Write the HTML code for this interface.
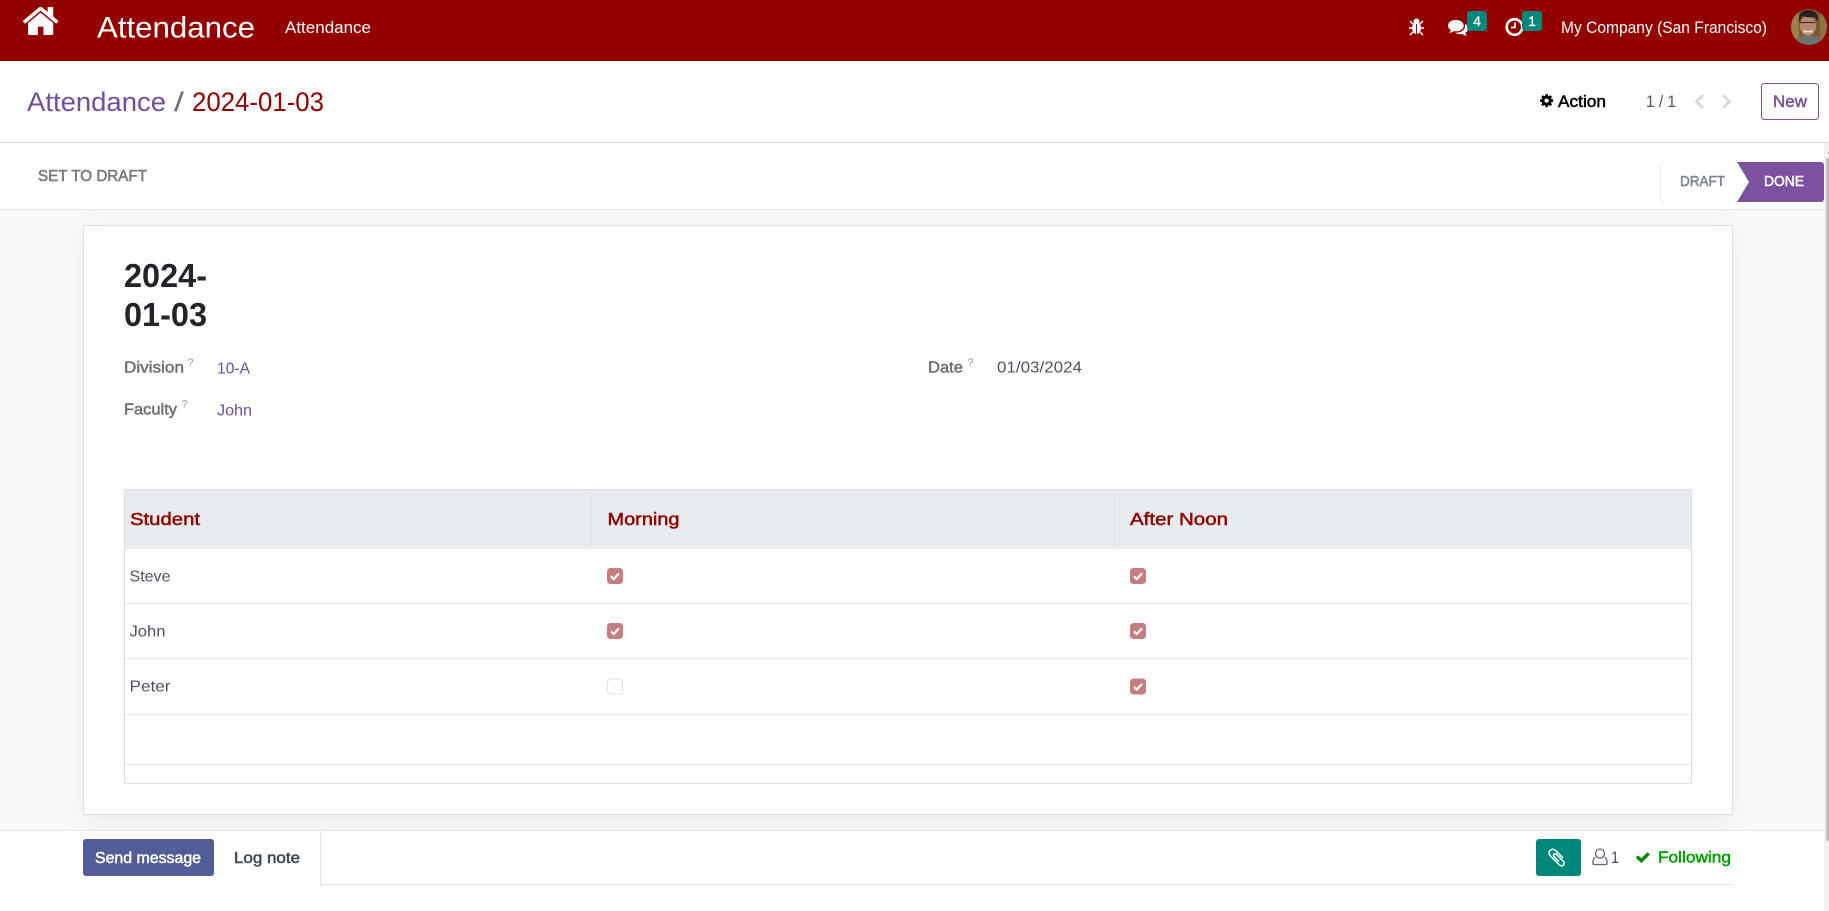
<!DOCTYPE html>
<html lang="en">
<head>
<meta charset="utf-8">
<title>Attendance</title>
<style>
html,body{margin:0;padding:0;background:#fff;width:1829px;height:911px;overflow:hidden}
svg{display:block}
text{font-family:"Liberation Sans",Arial,sans-serif}
.m{stroke-width:.5px}
</style>
</head>
<body>
<svg xmlns="http://www.w3.org/2000/svg" width="1829" height="911" viewBox="0 0 1829 911">
<defs>
<filter id="sh" x="-5%" y="-5%" width="110%" height="112%"><feDropShadow dx="0" dy="5" stdDeviation="10" flood-color="#000" flood-opacity=".06"/></filter>
<clipPath id="av"><circle cx="1809" cy="27" r="18"/></clipPath>
<path id="chk" d="M-4 0.3 L-1.3 3 L4 -2.6" fill="none" stroke="#fff" stroke-width="2.2"/>
</defs>

<rect width="1829" height="911" fill="#fff"/>
<!-- content bg -->
<rect x="0" y="210" width="1824" height="621" fill="#f8f9fa"/>

<!-- navbar -->
<rect width="1829" height="61" fill="#930000"/>
<g transform="translate(21,1.4) scale(.0219)"><path fill="#fff" d="M1472 992v480q0 26-19 45t-45 19h-384v-384h-256v384h-384q-26 0-45-19t-19-45v-480q0-1 .5-3t.5-3l575-474 575 474q1 2 1 6zm223-69l-62 74q-8 9-21 11h-3q-13 0-21-7l-692-577-692 577q-12 8-24 7-13-2-21-11l-62-74q-8-10-7-23.500t11-21.500l719-599q32-26 76-26t76 26l244 204v-195q0-14 9-23t23-9h192q14 0 23 9t9 23v408l219 182q10 8 11 21.500t-7 23.500z"/></g>
<text x="97" y="37.500" font-size="30" fill="#fff" textLength="158" lengthAdjust="spacingAndGlyphs">Attendance</text>
<text x="285" y="33" font-size="16.500" fill="#fff" textLength="86" lengthAdjust="spacingAndGlyphs">Attendance</text>

<!-- bug -->
<g fill="#fff" stroke="#fff">
<ellipse cx="1416.500" cy="28" rx="4.500" ry="6" stroke="none"/>
<circle cx="1416.500" cy="21.500" r="3" stroke="none"/>
<path fill="none" stroke-width="1.500" d="M1410 21l3 3M1423 21l-3 3M1409 28h4M1424 28h-4M1410 35l3-3M1423 35l-3-3"/>
</g>
<rect x="1416" y="24" width="1" height="11" fill="#930000"/>
<!-- comments -->
<g transform="translate(1448,17) scale(.0112)"><path fill="#fff" d="M1408 768q0 139-94 257t-256.500 186.500-353.500 68.500q-86 0-176-16-124 88-278 128-36 9-86 16h-3q-11 0-20.500-8t-11.500-21q-1-3-1-6.500t.5-6.500 2-6l2.500-5 3.500-5.500 4-5 4.500-5 4-4.500q5-6 23-25t26-29.500 22.500-29 25-38.500 20.500-44q-124-72-195-177t-71-224q0-139 94-257t256.500-186.500 353.500-68.500 353.500 68.500 256.500 186.500 94 257zm384 256q0 120-71 224.500t-195 176.500q10 24 20.500 44t25 38.500 22.500 29 26 29.500 23 25q1 1 4 4.500t4.500 5 4 5 3.500 5.500l2.500 5 2 6 .5 6.500-1 6.500q-3 14-13 22t-22 7q-50-7-86-16-154-40-278-128-90 16-176 16-271 0-472-132 58 4 88 4 161 0 309-45t264-129q125-92 192-212t67-254q0-77-23-152 129 71 204 178t75 230z"/></g>
<rect x="1467" y="11" width="20" height="20" rx="3" fill="#00877c"/>
<text x="1477" y="26" font-size="14" fill="#fff" stroke="#fff" stroke-width=".3" text-anchor="middle">4</text>
<!-- clock -->
<circle cx="1514.500" cy="27" r="7.800" fill="none" stroke="#fff" stroke-width="2.600"/>
<path d="M1515 22.500v5h-4" fill="none" stroke="#fff" stroke-width="1.800"/>
<rect x="1522" y="11" width="20" height="20" rx="3" fill="#00877c"/>
<text x="1532" y="26" font-size="14" fill="#fff" stroke="#fff" stroke-width=".3" text-anchor="middle">1</text>
<text x="1561" y="33" font-size="16.500" fill="#fff" textLength="206" lengthAdjust="spacingAndGlyphs">My Company (San Francisco)</text>
<!-- avatar -->
<g clip-path="url(#av)">
<rect x="1790" y="8" width="38" height="38" fill="#7a5a35"/>
<rect x="1790" y="8" width="9" height="38" fill="#9c8048"/>
<rect x="1820" y="8" width="8" height="38" fill="#8f7443"/>
<path d="M1793 46q2-9 11-10h10q9 1 11 10z" fill="#6f736e"/>
<ellipse cx="1808" cy="26" rx="8" ry="10" fill="#b98a6f"/>
<path d="M1799 23q-2-12 9-13 11 0 10 12l-3-5q-7 1-13-1z" fill="#26211f"/>
<path d="M1800 22.500h15" stroke="#3a3432" stroke-width="1.200"/>
<path d="M1803 29.500q5 3 10 0l-1 3h-8z" fill="#eadfd6"/>
</g>

<!-- control panel -->
<text x="27" y="111" font-size="27" fill="#70509e" textLength="139" lengthAdjust="spacingAndGlyphs">Attendance</text>
<text x="174" y="111" font-size="27" fill="#65707c" textLength="10" lengthAdjust="spacingAndGlyphs">/</text>
<text x="192" y="111" font-size="27" fill="#930000" textLength="132" lengthAdjust="spacingAndGlyphs">2024-01-03</text>

<g transform="translate(1539,93) scale(.0085)"><path fill="#000" d="M1152 896q0-106-75-181t-181-75-181 75-75 181 75 181 181 75 181-75 75-181zm512-109v222q0 12-8 23t-20 13l-185 28q-19 54-39 91 35 50 107 138 10 12 10 25t-9 23q-27 37-99 108t-94 71q-12 0-26-9l-138-108q-44 23-91 38-16 136-29 186-7 28-36 28h-222q-14 0-24.500-8.500t-11.500-21.500l-28-184q-49-16-90-37l-141 107q-10 9-25 9-14 0-25-11-126-114-165-168-7-10-7-23 0-12 8-23 15-21 51-66.500t54-70.500q-27-50-41-99l-183-27q-13-2-21-12.500t-8-23.500v-222q0-12 8-23t19-13l186-28q14-46 39-92-40-57-107-138-10-12-10-24 0-10 9-23 26-36 98.500-107.500t94.500-71.500q13 0 26 10l138 107q44-23 91-38 16-136 29-186 7-28 36-28h222q14 0 24.500 8.500t11.500 21.500l28 184q49 16 90 37l142-107q9-9 24-9 13 0 25 10 129 119 165 170 7 8 7 22 0 12-8 23-15 21-51 66.500t-54 70.500q26 50 41 98l183 28q13 2 21 12.500t8 23.500z"/></g>
<text class="m" x="1558" y="107" font-size="16.500" fill="#000" stroke="#000" textLength="48" lengthAdjust="spacingAndGlyphs">Action</text>
<text x="1646" y="107" font-size="16.500" fill="#4a5560" textLength="30" lengthAdjust="spacingAndGlyphs">1 / 1</text>
<path d="M1703 95l-6.500 6.500 6.500 6.500M1723 95l6.500 6.500-6.500 6.500" fill="none" stroke="#d8dade" stroke-width="3"/>
<rect x="1761.500" y="83.500" width="57" height="36" rx="3" fill="#fff" stroke="#7c53a0"/>
<text class="m" x="1773" y="107" font-size="16.500" fill="#7c53a0" stroke="#7c53a0" textLength="34" lengthAdjust="spacingAndGlyphs">New</text>

<rect x="0" y="142" width="1829" height="1" fill="#dcdde4"/>
<rect x="0" y="209" width="1824" height="1" fill="#dee0e4"/>

<!-- status row -->
<text class="m" x="38" y="181" font-size="15.500" fill="#72767b" stroke="#72767b" textLength="109" lengthAdjust="spacingAndGlyphs">SET TO DRAFT</text>
<path d="M1664 162.500a3.500 3.500 0 0 0-3.500 3.500v32a3.500 3.500 0 0 0 3.500 3.500" fill="none" stroke="#eceef0"/>
<text class="m" x="1680" y="186" font-size="14.500" fill="#7a838d" stroke="#7a838d" textLength="45" lengthAdjust="spacingAndGlyphs">DRAFT</text>
<path d="M1737 162H1821a3 3 0 0 1 3 3v34a3 3 0 0 1-3 3H1737L1749 182z" fill="#7c52a0"/>
<text class="m" x="1764" y="186" font-size="14.500" fill="#fff" stroke="#fff" textLength="40" lengthAdjust="spacingAndGlyphs">DONE</text>

<!-- scrollbar -->
<rect x="1824" y="143" width="5" height="768" fill="#f1f1f1"/>
<rect x="1826" y="158" width="3" height="683" fill="#c1c1c1"/>
<rect x="1828" y="152" width="1" height="1" fill="#888"/>

<!-- sheet -->
<rect x="83.500" y="225.500" width="1649" height="589" fill="#fff" stroke="#dcdee2" filter="url(#sh)"/>

<text x="124" y="287" font-size="33" fill="#212529" font-weight="bold" textLength="83" lengthAdjust="spacingAndGlyphs">2024-</text>
<text x="124" y="326" font-size="33" fill="#212529" font-weight="bold" textLength="83" lengthAdjust="spacingAndGlyphs">01-03</text>

<text class="m" x="124" y="372.500" font-size="16" fill="#6c7075" stroke="#6c7075" textLength="60" lengthAdjust="spacingAndGlyphs">Division</text>
<text x="187.500" y="366" font-size="11" fill="#a58fc0">?</text>
<text x="217" y="373.500" font-size="16" fill="#6b4f9f" textLength="33" lengthAdjust="spacingAndGlyphs">10-A</text>

<text class="m" x="124" y="414.500" font-size="16" fill="#6c7075" stroke="#6c7075" textLength="53" lengthAdjust="spacingAndGlyphs">Faculty</text>
<text x="181.500" y="407.500" font-size="11" fill="#a58fc0">?</text>
<text x="217" y="415.500" font-size="16" fill="#6b4f9f" textLength="35" lengthAdjust="spacingAndGlyphs">John</text>

<text class="m" x="928" y="372.500" font-size="16" fill="#6c7075" stroke="#6c7075" textLength="35" lengthAdjust="spacingAndGlyphs">Date</text>
<text x="967.500" y="366" font-size="11" fill="#a58fc0">?</text>
<text x="997" y="372.500" font-size="16" fill="#4b545e" textLength="85" lengthAdjust="spacingAndGlyphs">01/03/2024</text>

<!-- table -->
<rect x="124" y="490" width="1567" height="59" fill="#e9ecef"/>
<g shape-rendering="crispEdges">
<rect x="591" y="491" width="1" height="58" fill="#dfe2e6"/>
<rect x="1114" y="491" width="1" height="58" fill="#dfe2e6"/>
<rect x="124" y="603" width="1567" height="1" fill="#e6e8eb"/>
<rect x="124" y="658" width="1567" height="1" fill="#e6e8eb"/>
<rect x="124" y="714" width="1567" height="1" fill="#e6e8eb"/>
<rect x="124" y="764" width="1567" height="1" fill="#e6e8eb"/>
<rect x="124.500" y="489.500" width="1567" height="294" fill="none" stroke="#dadcdf"/>
</g>
<text class="m" x="130" y="525" font-size="17.500" fill="#930000" stroke="#930000" textLength="70" lengthAdjust="spacingAndGlyphs">Student</text>
<text class="m" x="607.500" y="525" font-size="17.500" fill="#930000" stroke="#930000" textLength="72" lengthAdjust="spacingAndGlyphs">Morning</text>
<text class="m" x="1130" y="525" font-size="17.500" fill="#930000" stroke="#930000" textLength="98" lengthAdjust="spacingAndGlyphs">After Noon</text>

<text x="129.500" y="581.500" font-size="16" fill="#4b545e" textLength="41" lengthAdjust="spacingAndGlyphs">Steve</text>
<text x="129.500" y="636.500" font-size="16" fill="#4b545e" textLength="36" lengthAdjust="spacingAndGlyphs">John</text>
<text x="129.500" y="691.500" font-size="16" fill="#4b545e" textLength="41" lengthAdjust="spacingAndGlyphs">Peter</text>

<g fill="#c67d7f">
<rect x="607" y="568" width="16" height="16" rx="3.500"/>
<rect x="607" y="623" width="16" height="16" rx="3.500"/>
<rect x="1130" y="568" width="16" height="16" rx="3.500"/>
<rect x="1130" y="623" width="16" height="16" rx="3.500"/>
<rect x="1130" y="678.500" width="16" height="16" rx="3.500"/>
</g>
<use href="#chk" x="615" y="576"/>
<use href="#chk" x="615" y="631"/>
<use href="#chk" x="1138" y="576"/>
<use href="#chk" x="1138" y="631"/>
<use href="#chk" x="1138" y="686.500"/>
<rect x="607.500" y="679" width="15" height="15" rx="3.500" fill="#fff" stroke="#dfe2e6"/>

<!-- chatter -->
<rect x="0" y="830" width="1824" height="81" fill="#fff"/>
<rect x="0" y="830" width="1824" height="1" fill="#dee0e5"/>
<rect x="320" y="831" width="1" height="54" fill="#dee0e5"/>
<rect x="320" y="884" width="1413" height="1" fill="#dee0e5"/>
<rect x="83" y="839" width="131" height="37" rx="3" fill="#525d97"/>
<text class="m" x="95" y="863" font-size="16" fill="#fff" stroke="#fff" textLength="106" lengthAdjust="spacingAndGlyphs">Send message</text>
<text class="m" x="234" y="863" font-size="16" fill="#3e4650" stroke="#3e4650" textLength="66" lengthAdjust="spacingAndGlyphs">Log note</text>

<rect x="1536" y="839" width="45" height="37" rx="3" fill="#00877c"/>
<g transform="translate(1546,847) scale(.0118)"><path fill="#fff" d="M1596 1385q0 117-79 196t-196 79q-135 0-235-100l-777-776q-113-115-113-271 0-159 110-270t269-111q158 0 273 113l605 606q10 10 10 22 0 16-30.500 46.500t-46.500 30.500q-13 0-23-10l-606-607q-79-77-181-77-106 0-179 75t-73 181q0 105 76 181l776 777q63 63 145 63 64 0 106-42t42-106q0-82-63-145l-581-581q-26-24-60-24-29 0-48 19t-19 48q0 32 25 59l410 410q10 10 10 22 0 16-31 47t-47 31q-12 0-22-10l-410-410q-63-61-63-149 0-82 57-139t139-57q88 0 149 63l581 581q100 98 100 235z"/></g>

<circle cx="1600" cy="853.500" r="4.500" fill="none" stroke="#5a6472" stroke-width="1.300"/>
<path d="M1595.500 857q-2.500 1.500-2.500 5v1.500q0 1 1 1h12q1 0 1-1V862q0-3.500-2.500-5" fill="none" stroke="#5a6472" stroke-width="1.300"/>
<text x="1611" y="863" font-size="16.500" fill="#3f4a5a" textLength="8" lengthAdjust="spacingAndGlyphs">1</text>
<g transform="translate(1635,849.500) scale(.00875)"><path fill="#008a00" d="M1671 566q0 40-28 68l-724 724-136 136q-28 28-68 28t-68-28l-136-136-362-362q-28-28-28-68t28-68l136-136q28-28 68-28t68 28l294 295 656-657q28-28 68-28t68 28l136 136q28 28 28 68z"/></g>
<text class="m" x="1658" y="862.500" font-size="16" fill="#00a000" stroke="#00a000" textLength="73" lengthAdjust="spacingAndGlyphs">Following</text>
</svg>
</body>
</html>
